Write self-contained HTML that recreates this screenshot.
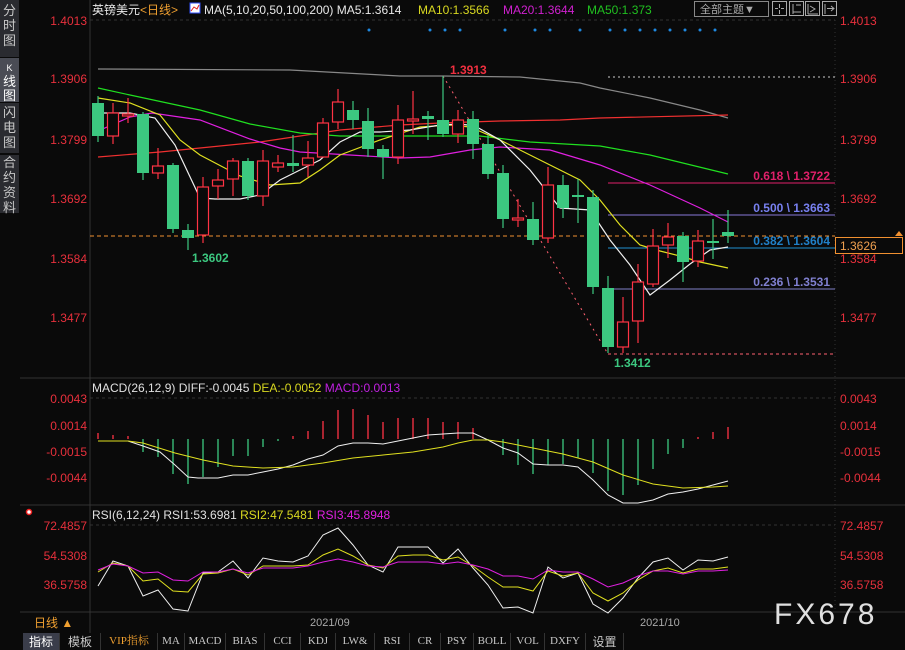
<!DOCTYPE html>
<html><head><meta charset="utf-8"><style>
html,body{margin:0;padding:0;background:#0a0a0a;width:905px;height:650px;overflow:hidden;font-family:"Liberation Sans","Noto Sans CJK SC",sans-serif;}
.side{position:absolute;left:0;width:19px;background:#2a2b30;color:#c8c8c8;font-size:13px;line-height:15px;text-align:center;}
.tabs{position:absolute;left:0;top:633px;width:905px;height:17px;background:#0a0a0a;font-family:"Liberation Serif","Noto Serif CJK SC",serif;font-size:11px;color:#c8c8c8;}
.tabs span{position:absolute;top:0;height:17px;line-height:17px;border-right:1px solid #333;text-align:center;}
</style></head><body>
<div class="side" style="top:0;height:54px;padding-top:3px;">分<br>时<br>图</div>
<div class="side" style="top:58px;height:42px;background:#4a4c55;color:#fff;padding-top:2px;line-height:14px"><span style="font-size:9px">K</span><br>线<br>图</div>
<div class="side" style="top:103px;height:48px;padding-top:2px;">闪<br>电<br>图</div>
<div class="side" style="top:155px;height:58px;padding-top:0px;">合<br>约<br>资<br>料</div>
<svg width="905" height="650" style="position:absolute;left:0;top:0" font-family="Liberation Sans, Noto Sans CJK SC, sans-serif">
<line x1="90" y1="0" x2="90" y2="633" stroke="#333"/>
<line x1="20" y1="378" x2="905" y2="378" stroke="#333"/>
<line x1="20" y1="505" x2="905" y2="505" stroke="#333"/>
<line x1="20" y1="612" x2="905" y2="612" stroke="#333"/>
<line x1="835" y1="20" x2="835" y2="612" stroke="#333" stroke-dasharray="1,3"/>
<line x1="90" y1="20" x2="835" y2="20" stroke="#333" stroke-dasharray="3,3"/>
<line x1="90" y1="398" x2="835" y2="398" stroke="#333" stroke-dasharray="3,3"/>
<line x1="90" y1="525" x2="835" y2="525" stroke="#333" stroke-dasharray="3,3"/>
<text x="92" y="14" font-size="12" fill="#e8e8e8">英镑美元<tspan fill="#f0a030">&lt;日线&gt;</tspan></text>
<rect x="190" y="3" width="10" height="10" fill="#fff" stroke="#3050ff"/><polyline points="191,11 194,7 197,9 199,5" stroke="#e02020" fill="none"/>
<text x="204" y="14" font-size="12" fill="#e8e8e8">MA(5,10,20,50,100,200) MA5:1.3614</text>
<text x="418" y="14" font-size="12" fill="#d8d820">MA10:1.3566</text>
<text x="503" y="14" font-size="12" fill="#d020d0">MA20:1.3644</text>
<text x="587" y="14" font-size="12" fill="#20c020">MA50:1.373</text>
<rect x="694.5" y="1.5" width="74" height="15" fill="none" stroke="#888"/>
<text x="700" y="13" font-size="11" fill="#aaa">全部主题▼</text>
<g fill="none" stroke="#aaa"><rect x="772.5" y="1.5" width="14" height="14"/><rect x="789.5" y="1.5" width="14" height="14"/><rect x="805.5" y="1.5" width="14" height="14"/><rect x="822.5" y="1.5" width="14" height="14"/>
<path d="M779.5 4v4M779.5 10v4M775 8.5h3M781 8.5h3M793 4v10M796 5h5M793 12h8M808 4v10M810 6l5 3-5 3M808 14h10M825 4v10M827 8.5h7M831 6l3 2.5-3 2.5"/></g>
<g font-size="12" fill="#e8303c" text-anchor="end">
<text x="87" y="25">1.4013</text><text x="87" y="83">1.3906</text><text x="87" y="144">1.3799</text><text x="87" y="203">1.3692</text><text x="87" y="263">1.3584</text><text x="87" y="322">1.3477</text>
<text x="87" y="403">0.0043</text><text x="87" y="430">0.0014</text><text x="87" y="456">-0.0015</text><text x="87" y="482">-0.0044</text>
<text x="87" y="530">72.4857</text><text x="87" y="560">54.5308</text><text x="87" y="589">36.5758</text>
</g>
<g font-size="12" fill="#e8303c">
<text x="840" y="25">1.4013</text><text x="840" y="83">1.3906</text><text x="840" y="144">1.3799</text><text x="840" y="203">1.3692</text><text x="840" y="263">1.3584</text><text x="840" y="322">1.3477</text>
<text x="840" y="403">0.0043</text><text x="840" y="430">0.0014</text><text x="840" y="456">-0.0015</text><text x="840" y="482">-0.0044</text>
<text x="840" y="530">72.4857</text><text x="840" y="560">54.5308</text><text x="840" y="589">36.5758</text>
</g>
<g fill="#1e88e0"><circle cx="369" cy="30" r="1.5"/><circle cx="430" cy="30" r="1.5"/><circle cx="445" cy="30" r="1.5"/><circle cx="460" cy="30" r="1.5"/><circle cx="505" cy="30" r="1.5"/><circle cx="535" cy="30" r="1.5"/><circle cx="550" cy="30" r="1.5"/><circle cx="580" cy="30" r="1.5"/><circle cx="610" cy="30" r="1.5"/><circle cx="625" cy="30" r="1.5"/><circle cx="640" cy="30" r="1.5"/><circle cx="655" cy="30" r="1.5"/><circle cx="670" cy="30" r="1.5"/><circle cx="685" cy="30" r="1.5"/><circle cx="700" cy="30" r="1.5"/><circle cx="715" cy="30" r="1.5"/></g>
<line x1="608" y1="77" x2="835" y2="77" stroke="#ccc" stroke-dasharray="2,3"/>
<line x1="608" y1="183" x2="835" y2="183" stroke="#e0206a"/>
<line x1="608" y1="215" x2="835" y2="215" stroke="#8878d8"/>
<line x1="608" y1="248" x2="835" y2="248" stroke="#2090d0"/>
<line x1="608" y1="289" x2="835" y2="289" stroke="#8080c8"/>
<line x1="608" y1="354" x2="835" y2="354" stroke="#ff6070" stroke-dasharray="3,3"/>
<line x1="90" y1="236" x2="835" y2="236" stroke="#f09030" stroke-dasharray="4,3"/>
<line x1="443" y1="76" x2="608" y2="354" stroke="#ff6070" stroke-dasharray="2,4"/>
<g font-size="12" font-weight="bold" text-anchor="end">
<text x="830" y="180" fill="#e0206a">0.618 \ 1.3722</text>
<text x="830" y="212" fill="#7880f0">0.500 \ 1.3663</text>
<text x="830" y="245" fill="#2080c8">0.382 \ 1.3604</text>
<text x="830" y="286" fill="#8080d0">0.236 \ 1.3531</text>
</g>
<rect x="835.5" y="237.5" width="67" height="16" fill="#0a0a0a" stroke="#f09030"/>
<text x="840" y="250" font-size="12" fill="#f0a050">1.3626</text>
<path d="M895 236l4-5 4 5z" fill="#f09030"/>
<g fill="none" stroke-width="1.2">
<polyline stroke="#888" points="98,69 290,70 400,76 443,76 520,77 580,83 600,88 650,98 700,110 728,118"/>
<polyline stroke="#f03030" points="98,157 160,152 200,148 260,142 300,136 340,130 400,125 440,123 500,121 560,120 600,118 728,115"/>
<polyline stroke="#20e020" points="98,88 130,95 200,110 250,124 300,133 340,136 400,136 480,136 530,142 600,146 650,155 728,174"/>
<polyline stroke="#e020e0" points="98,131 130,117 152,113 200,120 250,139 280,148 300,152 350,155 400,158 430,157 470,150 500,147 550,150 600,165 650,185 700,208 728,222"/>
<polyline stroke="#e0e020" points="98,98 130,103 160,115 180,140 200,155 240,176 270,185 300,183 320,170 340,155 380,140 420,127 450,125 470,127 500,140 540,160 580,180 600,200 620,225 640,245 660,251 680,256 700,262 728,268"/>
<polyline stroke="#f0f0f0" points="98,113 130,113 155,118 175,145 200,198 215,199 240,199 260,195 280,180 300,170 320,160 340,142 360,132 380,132 410,130 440,125 460,124 475,126 500,140 530,170 560,208 590,210 610,240 630,265 650,295 670,280 690,264 710,250 728,247"/>
</g>
<g id="c"></g>
<text x="450" y="74" font-size="12" font-weight="bold" fill="#f03040">1.3913</text>
<text x="192" y="262" font-size="12" font-weight="bold" fill="#3cc880">1.3602</text>
<text x="614" y="367" font-size="12" font-weight="bold" fill="#3cc880">1.3412</text>
<text x="92" y="392" font-size="12" fill="#e0e0e0">MACD(26,12,9) DIFF:-0.0045 <tspan fill="#d8d820">DEA:-0.0052</tspan> <tspan fill="#c020e0">MACD:0.0013</tspan></text>
<g id="m" stroke-width="1.3"></g>
<polyline fill="none" stroke="#f0f0f0" points="98,441 128,441 143,446 160,452 175,465 188,477 198,478 218,478 233,475 248,475 263,472 278,469 293,465 308,459 323,455 338,446 353,443 368,443 383,444 398,441 413,438 428,435 443,434 458,433 473,433 488,440 503,448 518,453 533,464 548,465 563,465 578,467 593,480 608,495 623,503 638,503 653,500 668,494 683,492 698,489 713,485 728,481"/>
<polyline fill="none" stroke="#e0e020" points="98,441 128,441 143,443 175,453 203,460 233,466 263,468 293,467 323,463 353,458 383,455 413,452 443,447 458,443 473,440 488,440 503,442 533,448 563,454 593,462 623,475 653,484 683,488 713,487 728,486"/>
<circle cx="29" cy="512" r="2.5" fill="#fff" stroke="#f02020" stroke-width="1.5"/>
<text x="92" y="519" font-size="12" fill="#e0e0e0">RSI(6,12,24) RSI1:53.6981 <tspan fill="#d8d820">RSI2:47.5481</tspan> <tspan fill="#e020e0">RSI3:45.8948</tspan></text>
<polyline fill="none" stroke="#f0f0f0" points="98,586 113,561 128,566 143,596 158,590 173,609 188,611 203,573 218,572 233,561 248,578 263,558 278,561 293,562 308,556 323,535 338,528 353,545 368,565 383,572 398,547 413,547 428,547 443,563 458,549 473,568 488,585 503,608 518,607 533,613 548,567 563,578 578,573 593,604 608,613 623,598 638,578 653,562 668,558 683,570 698,560 713,561 728,557"/>
<polyline fill="none" stroke="#e0e020" points="98,572 113,563 128,566 143,581 158,579 173,591 188,592 203,574 218,573 233,569 248,575 263,566 278,566 293,566 308,565 323,555 338,549 353,556 368,565 383,568 398,556 413,555 428,555 443,560 458,557 473,566 488,577 503,587 518,587 533,591 548,571 563,576 578,573 593,593 608,601 623,593 638,580 653,571 668,568 683,573 698,569 713,569 728,567"/>
<polyline fill="none" stroke="#e020e0" points="98,570 113,564 128,566 143,573 158,572 173,580 188,581 203,572 218,572 233,569 248,573 263,568 278,568 293,568 308,566 323,562 338,559 353,562 368,566 383,567 398,562 413,562 428,562 443,564 458,562 473,565 488,569 503,576 518,576 533,579 548,570 563,572 578,572 593,579 608,587 623,583 638,576 653,571 668,571 683,574 698,571 713,571 728,570"/>
<text x="34" y="627" font-size="12" fill="#f0a030">日线 ▲</text>
<text x="310" y="626" font-size="11" fill="#aaa">2021/09</text>
<text x="640" y="626" font-size="11" fill="#aaa">2021/10</text>
<text x="774" y="624" font-size="30" fill="#e0e0e0" letter-spacing="3">FX678</text>
</svg>
<div class="tabs">
<span style="left:23px;width:36px;background:#3a3d4a;color:#fff;font-family:'Noto Sans CJK SC',sans-serif;font-size:12px">指标</span>
<span style="left:60px;width:40px;font-family:'Noto Sans CJK SC',sans-serif;font-size:12px">模板</span>
<span style="left:101px;width:56px;color:#f0a030">VIP指标</span>
<span style="left:158px;width:26px">MA</span>
<span style="left:185px;width:40px">MACD</span>
<span style="left:226px;width:38px">BIAS</span>
<span style="left:265px;width:35px">CCI</span>
<span style="left:301px;width:34px">KDJ</span>
<span style="left:336px;width:38px">LW&amp;</span>
<span style="left:375px;width:34px">RSI</span>
<span style="left:410px;width:30px">CR</span>
<span style="left:441px;width:32px">PSY</span>
<span style="left:474px;width:36px">BOLL</span>
<span style="left:511px;width:33px">VOL</span>
<span style="left:545px;width:40px">DXFY</span>
<span style="left:586px;width:37px;font-family:'Noto Sans CJK SC',sans-serif;font-size:12px">设置</span>
</div>
<script>
var C=[["g",96,142,103,136],["r",103,144,113,136],["r",98,123,114,116],["g",112,180,114,173],["r",148,179,166,173],["g",163,233,165,229],["g",224,250,230,238],["r",177,243,187,235],["r",169,199,180,186],["r",158,196,161,179],["g",158,200,161,196],["r",150,206,161,196],["r",155,172,163,167],["g",135,172,163,166],["r",141,177,158,165],["r",118,157,123,157],["r",89,129,102,122],["g",101,129,110,120],["g",108,157,121,149],["g",145,179,149,157],["r",105,164,120,157],["r",91,134,119,121],["g",111,140,116,119],["g",76,137,120,134],["r",110,143,120,134],["g",111,159,119,144],["g",135,179,144,174],["g",165,228,173,219],["r",199,227,218,220],["g",202,245,219,240],["r",167,243,185,238],["g",175,218,185,208],["g",179,223,195,197],["g",190,294,197,287],["g",276,353,288,347],["r",297,353,322,347],["r",264,343,282,321],["r",229,287,246,284],["r",223,258,237,245],["g",232,282,236,262],["r",230,267,241,261],["g",219,259,241,243],["g",210,243,232,236]];
var s="";
C.forEach(function(c,i){var x=98+15*i,col=c[0]=="g"?"#3cc880":"#ff3344";
s+='<line x1="'+x+'" y1="'+c[1]+'" x2="'+x+'" y2="'+c[2]+'" stroke="'+col+'" stroke-width="1.2"/>';
var h=Math.max(c[4]-c[3],1.5);
if(c[0]=="g")s+='<rect x="'+(x-6)+'" y="'+c[3]+'" width="12" height="'+h+'" fill="'+col+'"/>';
else s+='<rect x="'+(x-5.5)+'" y="'+c[3]+'" width="11" height="'+h+'" fill="#0a0a0a" stroke="'+col+'" stroke-width="1.2"/>';});
document.getElementById("c").innerHTML=s;
var M=[[98,433,"r"],[113,435,"r"],[128,436,"r"],[143,452,"g"],[158,457,"g"],[173,474,"g"],[188,484,"g"],[203,477,"g"],[218,467,"g"],[233,456,"g"],[248,456,"g"],[263,447,"g"],[278,441,"g"],[293,436,"r"],[308,431,"r"],[323,421,"r"],[338,410,"r"],[353,409,"r"],[368,415,"r"],[383,422,"r"],[398,418,"r"],[413,418,"r"],[428,418,"r"],[443,422,"r"],[458,422,"r"],[473,428,"r"],[488,440,"g"],[503,455,"g"],[518,465,"g"],[533,474,"g"],[548,465,"g"],[563,464,"g"],[578,458,"g"],[593,473,"g"],[608,491,"g"],[623,495,"g"],[638,485,"g"],[653,469,"g"],[668,454,"g"],[683,448,"g"],[698,437,"r"],[713,432,"r"],[728,427,"r"]];
var t="";M.forEach(function(m){t+='<line x1="'+m[0]+'" x2="'+m[0]+'" y1="439" y2="'+m[1]+'" stroke="'+(m[2]=="g"?"#3cc880":"#ff3344")+'"/>';});
document.getElementById("m").innerHTML=t;
</script>
</body></html>
